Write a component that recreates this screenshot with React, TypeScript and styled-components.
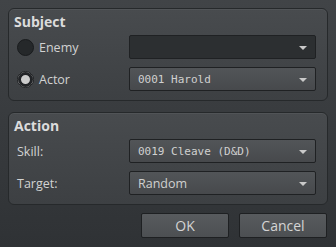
import React from "react";
import styled, { createGlobalStyle } from "styled-components";

const Global = createGlobalStyle`
  html, body { margin: 0; padding: 0; }
  body { background: #36393c; }
`;

const Window = styled.div`
  width: 336px;
  height: 247px;
  box-sizing: border-box;
  padding: 8px 9px 0 8px;
  display: flex;
  flex-direction: column;
  gap: 11px;
  background: linear-gradient(#414447, #2f3235);
  font-family: "Open Sans", "Noto Sans", sans-serif;
  color: #d6d6d6;
`;

const Frame = styled.div`
  box-sizing: border-box;
  border: 1px solid #26292b;
  border-radius: 6px;
  background: linear-gradient(#484b4e, #3d4043);
  box-shadow: inset 0 1px 0 rgba(255, 255, 255, 0.05);
  padding: 3px 11px 9px 5px;
  display: flex;
  flex-direction: column;
  gap: 8px;
  width: 320px;
`;

const Title = styled.div`
  font-weight: 700;
  font-size: 14px;
  line-height: 20px;
  height: 20px;
  color: #dcdcdc;
  margin-bottom: -5px;
`;

const Row = styled.div`
  display: grid;
  grid-template-columns: 112px 187px;
  align-items: center;
  height: 24px;
  padding-left: 3px;
`;

const RadioLabel = styled.label`
  display: flex;
  align-items: center;
  gap: 5px;
  font-size: 12.5px;
  color: #d2d2d2;
`;

const Radio = styled.span<{ $checked?: boolean }>`
  width: 17px;
  height: 17px;
  border-radius: 50%;
  box-sizing: border-box;
  border: 1px solid #191b1d;
  background: ${(p) => (p.$checked ? "#cbcbcb" : "#25282a")};
  box-shadow: ${(p) => (p.$checked ? "inset 0 0 0 3px #222427" : "none")};
`;

const Label = styled.span`
  font-size: 12.5px;
  color: #d2d2d2;
`;

const Combo = styled.div<{ $dark?: boolean; $mono?: boolean }>`
  box-sizing: border-box;
  height: 24px;
  border: 1px solid #1f2123;
  border-radius: 2px;
  background: ${(p) => (p.$dark ? "#2c2f31" : "linear-gradient(#525558, #47494c)")};
  display: flex;
  align-items: center;
  justify-content: space-between;
  padding: 0 8px 0 8px;
  font-family: ${(p) => (p.$mono ? '"DejaVu Sans Mono", monospace' : '"Open Sans", "Noto Sans", sans-serif')};
  font-size: ${(p) => (p.$mono ? "11px" : "12.5px")};
  color: #d0d0d0;
`;

const Arrow = styled.span`
  width: 0;
  height: 0;
  border-left: 4px solid transparent;
  border-right: 4px solid transparent;
  border-top: 4px solid #c9c9c9;
  margin-top: 1px;
`;

const Buttons = styled.div`
  display: flex;
  justify-content: flex-end;
  gap: 10px;
  margin-top: -3px;
`;

const Button = styled.button`
  box-sizing: border-box;
  width: 88px;
  height: 25px;
  border: 1px solid #1e2022;
  border-radius: 2px;
  background: linear-gradient(#585b5e, #4c4f52);
  color: #d4d4d4;
  font-family: "Open Sans", "Noto Sans", sans-serif;
  font-size: 14px;
  padding: 0;
`;

export default function App() {
  return (
    <>
      <Global />
      <Window>
        <Frame>
          <Title>Subject</Title>
          <Row>
            <RadioLabel>
              <Radio />
              Enemy
            </RadioLabel>
            <Combo $dark>
              <span />
              <Arrow />
            </Combo>
          </Row>
          <Row>
            <RadioLabel>
              <Radio $checked />
              Actor
            </RadioLabel>
            <Combo $mono>
              <span>0001 Harold</span>
              <Arrow />
            </Combo>
          </Row>
        </Frame>
        <Frame>
          <Title>Action</Title>
          <Row>
            <Label>Skill:</Label>
            <Combo $mono>
              <span>0019 Cleave (D&amp;D)</span>
              <Arrow />
            </Combo>
          </Row>
          <Row>
            <Label>Target:</Label>
            <Combo>
              <span>Random</span>
              <Arrow />
            </Combo>
          </Row>
        </Frame>
        <Buttons>
          <Button>OK</Button>
          <Button>Cancel</Button>
        </Buttons>
      </Window>
    </>
  );
}
